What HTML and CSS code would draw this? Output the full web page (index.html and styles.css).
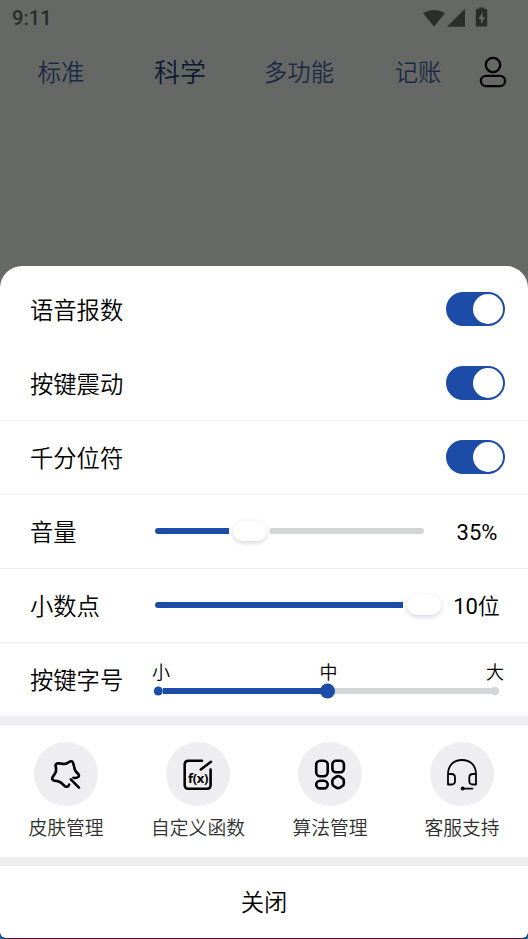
FILE: index.html
```html
<!DOCTYPE html>
<html lang="zh-CN">
<head>
<meta charset="utf-8">
<title>设置</title>
<link rel="stylesheet" href="styles.css">
</head>
<body>
<div class="screen">
  <header class="status">
    <span class="time">9:11</span>
    <svg class="status-icons" width="66" height="22" viewBox="0 0 66 22">
      <path d="M0 5Q11-.8 22 5L11 18.500Z"/>
      <path d="M24 18.700L42 .8V18.700Z"/>
      <path fill-rule="evenodd" d="M56-.6h5v1.600h2q1.200 0 1.200 1.200v15q0 1.200-1.200 1.200h-9q-1.200 0-1.200-1.200v-15Q52.800 1 54 1h2ZM59.500 4L55.500 11h2.500v5l4-7H59.500Z"/>
    </svg>
  </header>
  <nav class="tabs">
    <span class="tab">标准</span>
    <span class="tab active">科学</span>
    <span class="tab">多功能</span>
    <span class="tab">记账</span>
    <svg class="user" width="32" height="34" viewBox="0 0 32 34"><circle cx="16" cy="10" r="7.200"/><rect x="3.900" y="20.900" width="24.200" height="10.200" rx="5.100"/></svg>
  </nav>
  <main class="sheet">
    <div class="row first"><span>语音报数</span><i class="toggle"></i></div>
    <div class="row"><span>按键震动</span><i class="toggle"></i></div>
    <div class="row line faint"><span>千分位符</span><i class="toggle"></i></div>
    <div class="row line">
      <span class="label">音量</span>
      <div class="slider"><i class="fill volume"></i><i class="knob"></i><i class="rest"></i></div>
      <span class="value">35%</span>
    </div>
    <div class="row line">
      <span class="label">小数点</span>
      <div class="slider full"><i class="fill decimals"></i><i class="knob"></i></div>
      <span class="value">10<span class="unit">位</span></span>
    </div>
    <div class="row line">
      <span class="label">按键字号</span>
      <div class="sizes">
        <div class="size-names"><span>小</span><span>中</span><span>大</span></div>
        <svg width="350" height="16" viewBox="0 0 350 16">
          <path class="track-off" d="M176 8H342"/><circle class="dot-off" cx="343" cy="8" r="4.300"/>
          <path class="track-on" d="M11 8H176"/><circle class="dot-on" cx="6.300" cy="8" r="4.500"/><circle class="dot-on" cx="175.500" cy="8" r="7.500"/>
        </svg>
      </div>
    </div>
    <section class="tools">
      <div class="tool">
        <span class="bubble"><svg width="36" height="36" viewBox="0 0 36 36"><path d="M25.500 21.800Q28.900 22.500 30.500 20.700Q31.600 19.200 30 17.700Q26.300 14.500 26.300 11.500L25.200 7.200Q24.300 4.600 22 5.500Q18.500 8.300 15 7.900L10.300 7.300Q7.300 7.300 7.600 10.200Q8.700 14 7.300 17L4.700 21Q3.400 23.600 6 24.600C10.500 24.900 12.500 25.500 15 28.500L17.300 30.400Q20.300 31.800 21.100 28.500"/><path d="M22.800 23.400L31 31.700"/></svg></span>
        <span>皮肤管理</span>
      </div>
      <div class="tool">
        <span class="bubble"><svg width="36" height="36" viewBox="0 0 36 36"><path d="M22 4.800H8.500Q4.700 4.800 4.700 8.600V29Q4.700 32.800 8.500 32.800H26.800Q30.600 32.800 30.600 29V13.500M20.800 13.500L31 5.800"/><text x="8" y="26.500" textLength="20.500">f(x)</text></svg></span>
        <span>自定义函数</span>
      </div>
      <div class="tool">
        <span class="bubble"><svg width="36" height="36" viewBox="0 0 36 36"><rect x="4.200" y="4.800" width="11.500" height="15.500" rx="4"/><rect x="20.400" y="4.800" width="11.500" height="11.500" rx="3.500"/><rect x="4.200" y="24.700" width="11.500" height="7.700" rx="3.850"/><path d="M24.300 20.600Q26.100 19.600 27.900 20.600L30.500 22.300Q31.800 23.200 31.800 24.800V27.500Q31.800 29.100 30.400 30L27.900 31.600Q26.100 32.600 24.300 31.600L21.800 30Q20.400 29.100 20.400 27.500V24.800Q20.400 23.200 21.800 22.300Z"/></svg></span>
        <span>算法管理</span>
      </div>
      <div class="tool">
        <span class="bubble"><svg class="thin" width="36" height="36" viewBox="0 0 36 36"><path d="M4 28.500V18.500C4 9 10 4 18 4S32 9 32 18.500V28.500H29Q25.300 28.500 25.300 25V21.500Q25.300 18 29 18H32M4 18H7.500Q11 18 11 21.500V25Q11 28.500 7.500 28.500H4M19 32.600H28.500"/><circle class="mic" cx="18.700" cy="32.600" r="2"/></svg></span>
        <span>客服支持</span>
      </div>
    </section>
    <footer class="close">关闭</footer>
  </main>
</div>
</body>
</html>
```
FILE: styles.css
```css
* { box-sizing: border-box; }
body { margin: 0; background: linear-gradient(#666866 0 900px, #0865c5 900px); font-family: Roboto, "Noto Sans CJK SC", sans-serif; font-weight: 350; color: #000; }
.screen { width: 528px; height: 939px; overflow: hidden; display: flex; flex-direction: column; }
svg { display: block; overflow: visible; }
.status { height: 36px; display: flex; justify-content: space-between; align-items: flex-start; padding: 8px 39px 0 12px; }
.time { font-size: 20px; line-height: 21px; font-weight: 500; color: #2b2c2b; letter-spacing: .1px; }
.status-icons { fill: #2b2d2c; }
.tabs { height: 230px; display: grid; grid-template-columns: repeat(4, 119px) 1fr; padding-left: 1.500px; align-items: start; }
.tab { height: 74px; line-height: 75px; text-align: center; font-size: 23.300px; color: #1c2a44; }
.active { font-size: 26px; color: #0d1a32; }
.user { margin-top: 19px; margin-left: -.500px; fill: none; stroke: #000; stroke-width: 2.300; }
.sheet { height: 672px; background: #fff; border-radius: 22px 22px 6px 6px; overflow: hidden; box-shadow: 0 1px #57132e; flex: none; }
.row { height: 74px; display: flex; align-items: center; padding: 0 23px 0 30px; font-size: 23.300px; }
.first { height: 80px; padding-top: 6px; }
.line { border-top: 1px solid #eeeef0; }
.faint { border-top-color: #f6f6f7; }
.line > span:first-child { margin-top: -2px; }
.toggle { width: 59px; height: 34px; border-radius: 17px; background: #1c4ba8; margin-left: auto; display: flex; justify-content: flex-end; padding: 2px; }
.line .toggle { margin-top: -2px; }
.toggle::after { content: ""; width: 30px; height: 30px; border-radius: 50%; background: #fff; }
.label { width: 125px; flex: none; }
.slider { width: 269px; flex: none; display: flex; align-items: center; margin-top: -2px; }
.full { width: 290px; }
.fill { height: 6px; background: #1c4ba8; border-radius: 3px 0 0 3px; flex: none; }
.volume { width: 74px; }
.decimals { width: 248px; }
.knob { width: 34px; height: 20px; flex: none; margin: 0 3px 0 4px; border-radius: 10px; background: #fff; box-shadow: 0 2px 5px #1c1c502e; }
.rest { flex: 1; height: 6px; background: #d4d5d9; border-radius: 0 3px 3px 0; }
.value { flex: 1; text-align: center; font-size: 22px; font-weight: 400; white-space: nowrap; }
.unit { font-weight: 350; }
.slider:not(.full) + .value { padding-left: 25px; padding-top: 1px; }
.full + .value { padding-left: 3px; margin-top: -3px; }
.sizes { width: 350px; margin-left: -3px; flex: none; padding-top: 1px; }
.size-names { display: flex; justify-content: space-between; font-size: 18px; line-height: 24px; height: 22px; }
.size-names span:nth-child(2) { padding-left: 1px; }
.size-names span:last-child { margin-right: -2px; }
.track-on, .track-off { fill: none; stroke-width: 6; }
.track-on { stroke: #1c4ba8; }
.track-off { stroke: #d4d5d9; }
.dot-on { fill: #1c4ba8; }
.dot-off { fill: #d4d5d9; }
.tools { height: 150px; border: solid #eeeef0; border-width: 9px 0; display: grid; grid-template-columns: repeat(4, 1fr); padding-top: 17px; }
.tool { display: flex; flex-direction: column; align-items: center; font-size: 18.800px; line-height: 28px; color: #303030; gap: 9px; }
.bubble { width: 64px; height: 64px; border-radius: 50%; background: #eeeef0; display: grid; place-items: center; }
.bubble svg { fill: none; stroke: #000; stroke-width: 2.600; stroke-linecap: round; stroke-linejoin: round; }
.bubble .thin { stroke-width: 1.800; }
.bubble .mic { fill: #000; stroke: none; }
.bubble text { font: bold 13px "Noto Sans", sans-serif; fill: #000; stroke: none; }
.close { height: 72px; line-height: 75px; text-align: center; font-size: 23.300px; }
```
